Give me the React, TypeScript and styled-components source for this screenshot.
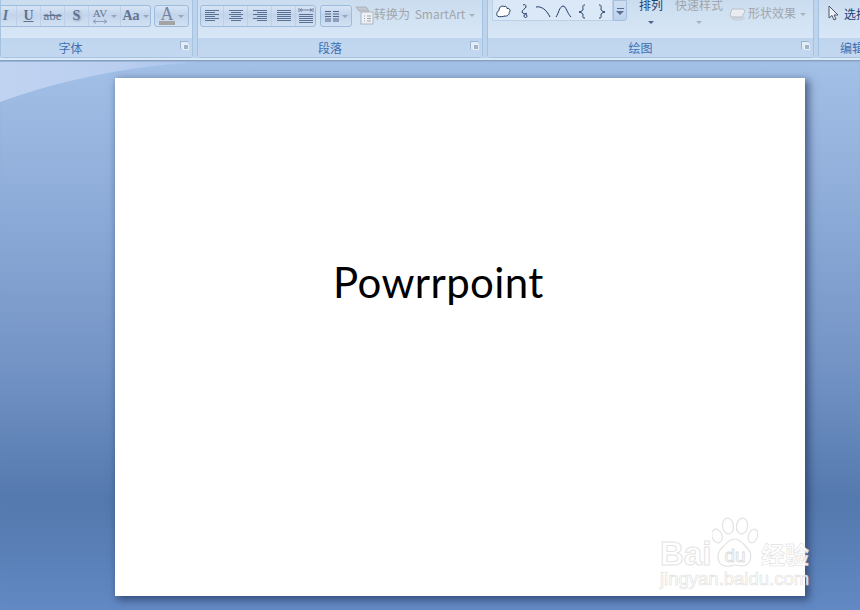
import React from 'react';
import styled, { createGlobalStyle } from 'styled-components';

const GlobalStyle = createGlobalStyle`
  html, body {
    margin: 0;
    padding: 0;
    width: 860px;
    height: 610px;
    overflow: hidden;
    font-family: "Noto Sans CJK SC", "Liberation Sans", sans-serif;
  }
`;

const Page = styled.div`
  position: relative;
  width: 860px;
  height: 610px;
  overflow: hidden;
  display: flex;
  flex-direction: column;
`;

const Ribbon = styled.div`
  flex: none;
  height: 58px;
  display: flex;
  gap: 4px;
  background: #bed4ec;
  border-bottom: 2px solid #d9e9f5;
  box-sizing: content-box;
  overflow: hidden;
`;

const Group = styled.div<{ $w: number }>`
  flex: none;
  width: ${(p) => p.$w}px;
  box-sizing: border-box;
  display: flex;
  flex-direction: column;
  background: #d3e3f4;
  border-left: 1px solid #a5c2e0;
  border-right: 1px solid #a5c2e0;
  border-bottom: 1px solid #a5c2e0;
  border-radius: 0 0 4px 4px;
`;

const Tools = styled.div<{ $left: number }>`
  height: 38px;
  box-sizing: border-box;
  display: flex;
  align-items: flex-start;
  padding: 5px 0 0 ${(p) => p.$left}px;
  background: linear-gradient(#cadcef, #d0e1f2 40%, #d8e7f7);
`;

const Label = styled.div<{ $pr: number }>`
  position: relative;
  flex: 1;
  display: flex;
  align-items: center;
  justify-content: center;
  padding-right: ${(p) => p.$pr}px;
  font-size: 12px;
  line-height: 18px;
  white-space: nowrap;
  color: #3f6fb0;
  background: linear-gradient(#bfd5ee, #c3d8f0);
`;

const Launcher = styled.span`
  position: absolute;
  right: 4px;
  top: 3px;
  width: 7px;
  height: 7px;
  border-left: 1px solid #9db4cf;
  border-top: 1px solid #9db4cf;
  background: #e2ecf7;
  &::after {
    content: '';
    position: absolute;
    right: -1px;
    bottom: -1px;
    width: 4px;
    height: 4px;
    background: #a3b3c7;
    border: 1px solid #e6eef8;
  }
`;

const BtnGroup = styled.div`
  display: flex;
  height: 22px;
  box-sizing: border-box;
  border: 1px solid #9ebbdc;
  border-radius: 3px;
  background: linear-gradient(#d7e5f5, #c2d4eb 45%, #d2e1f3);
`;

const OpenGroup = styled(BtnGroup)`
  border-left: none;
  border-radius: 0 3px 3px 0;
`;

const Cell = styled.div<{ $w: number }>`
  flex: none;
  width: ${(p) => p.$w}px;
  height: 100%;
  box-sizing: border-box;
  display: flex;
  align-items: center;
  justify-content: center;
  gap: 3px;
  border-right: 1px solid #bdd0e7;
  color: #62738f;
  font: bold 14px "Liberation Serif", serif;
  &:last-child {
    border-right: none;
  }
`;

const Arrow = styled.i<{ $c?: string }>`
  display: inline-block;
  width: 0;
  height: 0;
  flex: none;
  border-left: 3px solid transparent;
  border-right: 3px solid transparent;
  border-top: 3px solid ${(p) => p.$c ?? '#98a6ba'};
`;

const Under = styled.span`
  text-decoration: underline;
`;

const Strike = styled.span`
  text-decoration: line-through;
  font-size: 13px;
  font-weight: normal;
`;

const Italic = styled.span`
  font-style: italic;
  margin-left: -6px;
`;

const Shadowed = styled.span`
  text-shadow: 1px 1px 2px #8c9cb3;
`;

const Spacing = styled.span`
  display: flex;
  flex-direction: column;
  align-items: center;
  font-size: 11px;
  font-weight: normal;
  line-height: 11px;
`;

const FontColor = styled.span`
  display: flex;
  flex-direction: column;
  align-items: center;
  font-size: 18px;
  font-weight: normal;
  line-height: 14px;
  color: #75859f;
  &::after {
    content: '';
    width: 16px;
    height: 4px;
    background: #a4a4a4;
  }
`;

const Spaced = styled.div<{ $l: number }>`
  margin-left: ${(p) => p.$l}px;
  display: flex;
  align-items: center;
`;

const GreyText = styled.span`
  font-size: 12px;
  line-height: 18px;
  margin-top: -2px;
  word-spacing: 2px;
  color: #a2a6ab;
  white-space: nowrap;
`;

const Gallery = styled.div`
  display: flex;
  align-items: flex-start;
  width: 121px;
  height: 21px;
  margin-top: -5px;
  box-sizing: border-box;
  padding: 1px 0 0 2px;
  background: #dbe8f7;
  border: 1px solid #bcd1e8;
  border-top: none;
`;

const GalleryScroll = styled.div`
  width: 14px;
  height: 21px;
  margin-top: -5px;
  box-sizing: border-box;
  padding-top: 7px;
  display: flex;
  flex-direction: column;
  align-items: center;
  gap: 2px;
  background: linear-gradient(#cfdff2, #bcd2ec);
  border: 1px solid #a5c0df;
  border-radius: 0 0 3px 0;
  &::before {
    content: '';
    width: 7px;
    height: 1px;
    background: #5b6f90;
  }
  &::after {
    content: '';
    border-left: 4px solid transparent;
    border-right: 4px solid transparent;
    border-top: 4px solid #5b6f90;
  }
`;

const Stack = styled.div<{ $l: number; $w: number }>`
  margin-left: ${(p) => p.$l}px;
  margin-top: -9px;
  width: ${(p) => p.$w}px;
  display: flex;
  flex-direction: column;
  align-items: center;
  gap: 7px;
`;

const StackText = styled.span<{ $active?: boolean }>`
  font-size: 12px;
  line-height: 18px;
  white-space: nowrap;
  color: ${(p) => (p.$active ? '#1f3f72' : '#a2a6ab')};
`;

const DarkText = styled.span`
  font-size: 12px;
  line-height: 18px;
  color: #1f3f72;
  white-space: nowrap;
`;

const Workspace = styled.div`
  position: relative;
  flex: 1;
  padding: 18px 0 0 115px;
  background: linear-gradient(#a3c0e7 0, #8fadd9 25%, #7494c6 55%, #5479ae 80%, #5a80b8 90%, #6389c4 100%);
  box-shadow: inset 0 2px 2px -1px #7d93b0;
`;

const Swoosh = styled.svg`
  position: absolute;
  left: 0;
  top: 0;
`;

const Slide = styled.div`
  position: relative;
  width: 690px;
  height: 518px;
  box-sizing: border-box;
  padding: 179px 0 0 218px;
  background: #fff;
  box-shadow: 3px 3px 8px 1px rgba(30, 48, 85, 0.65);
`;

const SlideTitle = styled.div`
  font: 42px/50px Lato, "Open Sans", sans-serif;
  letter-spacing: 0.4px;
  color: #000;
`;

const Watermark = styled.div`
  position: absolute;
  left: 660px;
  top: 517px;
  width: 155px;
  display: flex;
  flex-direction: column;
  opacity: 0.9;
`;

const MarkRow = styled.div`
  display: flex;
  align-items: flex-end;
  height: 52px;
`;

const MarkText = styled.span`
  font: bold 33px/30px "Liberation Sans", sans-serif;
  width: 52px;
  color: #fff;
  -webkit-text-stroke: 1px #e2e2e2;
`;

const MarkCjk = styled.span`
  font: bold 24px/24px "Noto Sans CJK SC", sans-serif;
  color: #fff;
  -webkit-text-stroke: 0.6px #dedede;
  margin: 0 0 3px 3px;
  white-space: nowrap;
`;

const MarkUrl = styled.span`
  font: 18.5px/20px "Liberation Sans", sans-serif;
  color: #fff;
  -webkit-text-stroke: 0.6px #dcdcdc;
  white-space: nowrap;
`;

const Lines = ({ kind }: { kind: 'left' | 'center' | 'right' | 'justify' }) => {
  const rows = [0, 1, 2, 3, 4, 5];
  const span = (i: number): [number, number] => {
    const short = i % 2 === 1;
    if (kind === 'left') return [1, short ? 11 : 15];
    if (kind === 'right') return [short ? 5 : 1, 15];
    if (kind === 'center') return short ? [3, 13] : [1, 15];
    return [1, 15];
  };
  return (
    <svg width="16" height="14" viewBox="0 0 16 14">
      {rows.map((i) => {
        const [a, b] = span(i);
        return <path key={i} d={`M${a} ${1.5 + i * 2}H${b}`} stroke="#5a6f94" strokeWidth="1" />;
      })}
    </svg>
  );
};

const Distribute = () => (
  <svg width="16" height="17" viewBox="0 0 16 17" fill="none">
    <path d="M1 0v4M15 0v4M2 2h12M4 0.500L2 2l2 1.500M12 0.500L14 2l-2 1.500" stroke="#6f7f99" />
    {[6.5, 8.5, 10.5, 12.5, 14.5].map((y) => (
      <path key={y} d={`M1 ${y}H15`} stroke="#5a6f94" />
    ))}
  </svg>
);

const Columns = () => (
  <svg width="14" height="12" viewBox="0 0 14 12">
    {[1.5, 4, 6.5, 9, 11].map((y) => (
      <path key={y} d={`M0 ${y}H6M8 ${y}H14`} stroke="#4f6488" />
    ))}
  </svg>
);

const SpacingArrow = () => (
  <svg width="16" height="5" viewBox="0 0 16 5" fill="none" stroke="#8ca2c2">
    <path d="M1 2.500h14M4 0.500L1 2.500l3 2M12 0.500l3 2-3 2" />
  </svg>
);

const SmartArtIcon = () => (
  <svg width="19" height="20" viewBox="0 0 19 20">
    <path d="M1 2h10l3 4H4z" fill="#c3c8cf" stroke="#aab0b8" />
    <rect x="6" y="7" width="12" height="12" fill="#eef2f7" stroke="#aeb4bc" />
    <path d="M9 11h1M12 11h4M9 13.500h1M12 13.500h4M9 16h1M12 16h4" stroke="#9aa2ac" />
  </svg>
);

const Shapes = () => (
  <svg width="116" height="18" viewBox="0 0 116 18" fill="none" stroke="#223c63" strokeWidth="1">
    <path d="M3 15.500c-2-1-1.500-5 1-6 0-4 3-5 5-4 2-1 3 1 3 2 3-1 4 3 2 4 1 2-2 4-4 3.500-2 .5-5 1-7 .5z" fill="#fff" />
    <path d="M28 4c2-1 3 0 3 2-1 2-4 3-4 5 0 2 5 1 5 4 0 2-3 2-3 0s2-2 3-3" />
    <path d="M41 6c5-1 10 2 14 10" />
    <path d="M61 16c3-4 3-10 7-11 3 0 4 7 8 11" />
    <path d="M90 4c-3 0-2 2-2 4s-1 2-4 3c3 1 4 1 4 3s-1 3 2 3" />
    <path d="M104 4c3 0 2 2 2 4s1 2 4 3c-3 1-4 1-4 3s1 3-2 3" />
  </svg>
);

const EffectIcon = () => (
  <svg width="17" height="18" viewBox="0 -1 17 18">
    <ellipse cx="9" cy="12" rx="7" ry="3" fill="#c8d4e2" />
    <path d="M3 3h11l2 2-3 6H2L1 9z" fill="#e9edf2" stroke="#b9bfc8" />
  </svg>
);

const Cursor = () => (
  <svg width="11" height="16" viewBox="0 0 11 16">
    <path d="M1 1v12l3-2.500L6 15l2-1-2-4h4z" fill="#eef2f8" stroke="#4b5468" />
  </svg>
);

const Paw = () => (
  <svg width="46" height="52" viewBox="0 0 46 52" fill="#fff" stroke="#e0e0e0" strokeWidth="1.2">
    <ellipse cx="5" cy="19" rx="5" ry="7" transform="rotate(-20 5 19)" />
    <ellipse cx="16" cy="9" rx="5.500" ry="8" transform="rotate(-8 16 9)" />
    <ellipse cx="30" cy="9" rx="5.500" ry="8" transform="rotate(8 30 9)" />
    <ellipse cx="41" cy="19" rx="4.500" ry="7" transform="rotate(20 41 19)" />
    <path d="M23 22c6 0 9 6 13 10 5 6 3 16-5 17-3 0-5-1-8-1s-6 2-10 1c-7-1-9-10-5-16 4-4 8-11 15-11z" />
    <text x="23" y="45" textAnchor="middle" fontFamily="Liberation Sans, sans-serif" fontSize="19" fill="#fff" stroke="#d8d8d8" strokeWidth="0.8">du</text>
  </svg>
);

function FontButtons() {
  return (
    <OpenGroup>
      <Cell $w={16}><Italic>I</Italic></Cell>
      <Cell $w={24}><Under>U</Under></Cell>
      <Cell $w={24}><Strike>abe</Strike></Cell>
      <Cell $w={24}><Shadowed>S</Shadowed></Cell>
      <Cell $w={32}>
        <Spacing>AV<SpacingArrow /></Spacing>
        <Arrow />
      </Cell>
      <Cell $w={29}>
        Aa
        <Arrow />
      </Cell>
    </OpenGroup>
  );
}

export default function App() {
  return (
    <>
      <GlobalStyle />
      <Page>
        <Ribbon>
          <Group $w={193}>
            <Tools $left={0}>
              <FontButtons />
              <Spaced $l={3}>
                <BtnGroup>
                  <Cell $w={33}>
                    <FontColor>A</FontColor>
                    <Arrow />
                  </Cell>
                </BtnGroup>
              </Spaced>
            </Tools>
            <Label $pr={52}>
              字体
              <Launcher />
            </Label>
          </Group>
          <Group $w={286}>
            <Tools $left={2}>
              <BtnGroup>
                <Cell $w={23}><Lines kind="left" /></Cell>
                <Cell $w={24}><Lines kind="center" /></Cell>
                <Cell $w={24}><Lines kind="right" /></Cell>
                <Cell $w={24}><Lines kind="justify" /></Cell>
                <Cell $w={19}><Distribute /></Cell>
              </BtnGroup>
              <Spaced $l={4}>
                <BtnGroup>
                  <Cell $w={30}>
                    <Columns />
                    <Arrow />
                  </Cell>
                </BtnGroup>
              </Spaced>
              <Spaced $l={3}>
                <SmartArtIcon />
                <GreyText>转换为 SmartArt</GreyText>
                <Spaced $l={4}><Arrow $c="#a9b1bc" /></Spaced>
              </Spaced>
            </Tools>
            <Label $pr={20}>
              段落
              <Launcher />
            </Label>
          </Group>
          <Group $w={327}>
            <Tools $left={4}>
              <Gallery><Shapes /></Gallery>
              <GalleryScroll />
              <Stack $l={12} $w={24}>
                <StackText $active>排列</StackText>
                <Arrow $c="#4d6488" />
              </Stack>
              <Stack $l={12} $w={48}>
                <StackText>快速样式</StackText>
                <Arrow $c="#a9b1bc" />
              </Stack>
              <Spaced $l={6}>
                <EffectIcon />
                <Spaced $l={2}><GreyText>形状效果</GreyText></Spaced>
                <Spaced $l={4}><Arrow $c="#a9b1bc" /></Spaced>
              </Spaced>
            </Tools>
            <Label $pr={20}>
              绘图
              <Launcher />
            </Label>
          </Group>
          <Group $w={80}>
            <Tools $left={9}>
              <Cursor />
              <Spaced $l={5}><DarkText>选择</DarkText></Spaced>
            </Tools>
            <Label $pr={12}>编辑</Label>
          </Group>
        </Ribbon>
        <Workspace>
          <Swoosh width="230" height="50" viewBox="0 0 230 50">
            <defs>
              <linearGradient id="swoosh" x1="0" x2="1" y1="0" y2="0">
                <stop offset="0" stopColor="#c0d3f0" />
                <stop offset="0.6" stopColor="#bacef0" />
                <stop offset="1" stopColor="#a8c3e8" />
              </linearGradient>
            </defs>
            <path d="M0 42C60 20 130 6 200 2H0z" fill="url(#swoosh)" />
          </Swoosh>
          <Slide>
            <SlideTitle>Powrrpoint</SlideTitle>
          </Slide>
        </Workspace>
        <Watermark>
          <MarkRow>
            <MarkText>Bai</MarkText>
            <Paw />
            <MarkCjk>经验</MarkCjk>
          </MarkRow>
          <MarkUrl>jingyan.baidu.com</MarkUrl>
        </Watermark>
      </Page>
    </>
  );
}
